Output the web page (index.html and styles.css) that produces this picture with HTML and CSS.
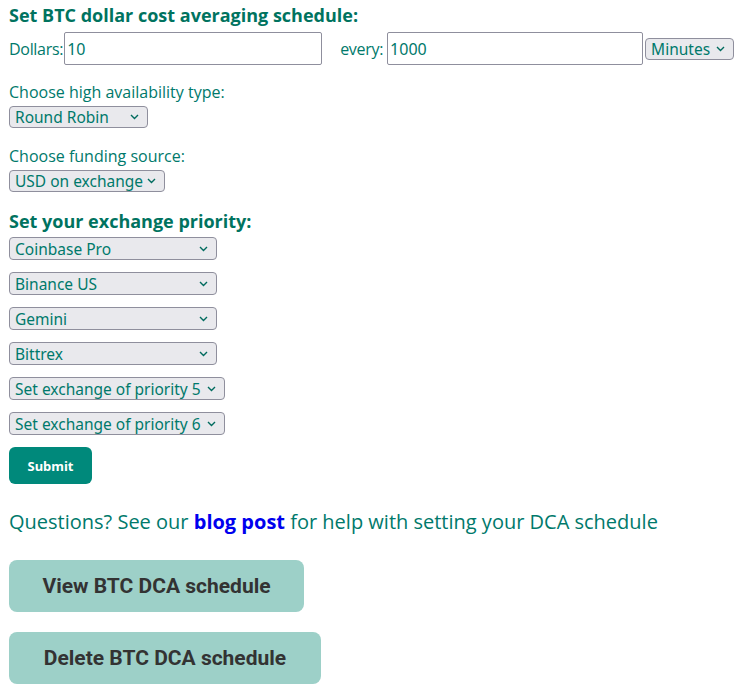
FILE: index.html
```html
<!DOCTYPE html>
<html>
<head>
<meta charset="utf-8">
<link rel="stylesheet" href="styles.css">
</head>
<body>
<form class="dca">
  <h3 class="heading">Set BTC dollar cost averaging schedule:</h3>
  <div class="amount-row">
    <label class="lbl">Dollars:</label>
    <input class="txt" type="text" value="10">
    <label class="lbl lbl-every">every:</label>
    <input class="txt txt-every" type="text" value="1000">
    <select class="sel sel-unit"><option>Minutes</option></select>
  </div>

  <div class="field">
    <label class="lbl">Choose high availability type:</label>
    <select class="sel sel-ha"><option>Round Robin</option></select>
  </div>

  <div class="field">
    <label class="lbl">Choose funding source:</label>
    <select class="sel sel-fund"><option>USD on exchange</option></select>
  </div>

  <h3 class="heading heading-pri">Set your exchange priority:</h3>
  <div class="priority-list">
    <select class="sel sel-ex"><option>Coinbase Pro</option></select>
    <select class="sel sel-ex"><option>Binance US</option></select>
    <select class="sel sel-ex"><option>Gemini</option></select>
    <select class="sel sel-ex"><option>Bittrex</option></select>
    <select class="sel sel-pri"><option>Set exchange of priority 5</option></select>
    <select class="sel sel-pri"><option>Set exchange of priority 6</option></select>
  </div>
  <button class="submit" type="button">Submit</button>
</form>

<p class="questions">Questions? See our <a class="blog" href="#">blog post</a> for help with setting your DCA schedule</p>

<div class="actions">
  <button class="action action-view" type="button">View BTC DCA schedule</button>
  <button class="action action-delete" type="button">Delete BTC DCA schedule</button>
</div>
</body>
</html>
```

FILE: styles.css
```css
html, body {
  margin: 0;
  padding: 0;
  background: #ffffff;
}
body {
  padding: 4px 9px;
  font-family: "Open Sans", "Noto Sans", sans-serif;
  color: #00796b;
}
.dca {
  display: flex;
  flex-direction: column;
  align-items: flex-start;
}
.heading {
  margin: 0;
  font-size: 18px;
  line-height: 22px;
  font-weight: 700;
  color: #00735f;
}
.amount-row {
  display: flex;
  align-items: center;
  margin-top: 6px;
}
.lbl {
  font-size: 16px;
  line-height: 20px;
}
.amount-row .lbl {
  letter-spacing: -0.3px;
}
.lbl-every {
  margin-left: 18px;
}
.txt {
  box-sizing: border-box;
  width: 258px;
  height: 33px;
  margin: 0 0 0 1px;
  padding: 0 2px;
  border: 1px solid #8f8f9d;
  border-radius: 2px;
  font-family: "Noto Sans", sans-serif;
  font-size: 16px;
  color: #00796b;
}
.txt-every {
  width: 256px;
  margin-left: 4px;
}
.sel {
  box-sizing: border-box;
  height: 22px;
  margin: 0;
  padding: 0 20px 0 5px;
  border: 1px solid #8f8f9d;
  border-radius: 4px;
  background-color: #e9e9ed;
  background-image: url("data:image/svg+xml;utf8,<svg xmlns='http://www.w3.org/2000/svg' width='9' height='6' viewBox='0 0 9 6'><path d='M1 1l3.5 3.5 3.5-3.5' fill='none' stroke='%23006b5e' stroke-width='1.4'/></svg>");
  background-repeat: no-repeat;
  background-position: right 8px center;
  -webkit-appearance: none;
  appearance: none;
  font-family: "Noto Sans", sans-serif;
  font-size: 15.5px;
  line-height: 20px;
  color: #00796b;
}
.sel-unit {
  width: 89px;
  margin-left: 2px;
}
.field {
  display: flex;
  flex-direction: column;
  align-items: flex-start;
  margin-top: 17px;
}
.field .lbl {
  margin-bottom: 4px;
}
.field + .field {
  margin-top: 18px;
}
.sel-ha { width: 139px; }
.sel-fund { width: 156px; }
.heading-pri {
  margin-top: 18px;
}
.priority-list {
  display: flex;
  flex-direction: column;
  align-items: flex-start;
  gap: 12px;
  margin-top: 5px;
}
.sel-ex { width: 208px; height: 23px; }
.sel-pri { width: 216px; height: 23px; }
.submit {
  margin-top: 12px;
  width: 83px;
  height: 37px;
  border: none;
  border-radius: 6px;
  background: #00897b;
  color: #ffffff;
  font-family: "Noto Sans", sans-serif;
  font-weight: 700;
  font-size: 13px;
}
.questions {
  margin: 26px 0 0;
  font-size: 20px;
  line-height: 24px;
  color: #00796b;
}
.blog {
  color: #0000ee;
  font-weight: 700;
  text-decoration: none;
}
.actions {
  display: flex;
  flex-direction: column;
  align-items: flex-start;
  gap: 20px;
  margin-top: 26px;
}
.action {
  height: 52px;
  padding: 0;
  border: none;
  border-radius: 8px;
  background: #9dd0c8;
  color: #333333;
  font-family: Roboto, "Liberation Sans", sans-serif;
  font-weight: 700;
  font-size: 21px;
  white-space: nowrap;
}
.action-view { width: 295px; }
.action-delete { width: 312px; }
```
